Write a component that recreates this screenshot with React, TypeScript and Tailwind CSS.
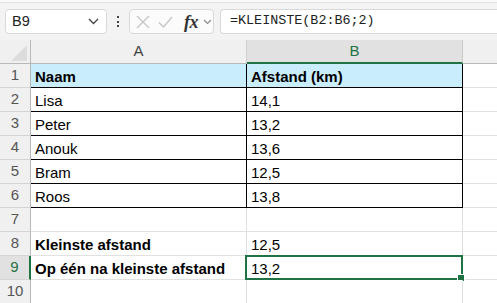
import React from "react";

type Row = { n: number; a?: string; b?: string; kind?: "head" | "table" | "bold" };

const ROWS: Row[] = [
  { n: 1, a: "Naam", b: "Afstand (km)", kind: "head" },
  { n: 2, a: "Lisa", b: "14,1", kind: "table" },
  { n: 3, a: "Peter", b: "13,2", kind: "table" },
  { n: 4, a: "Anouk", b: "13,6", kind: "table" },
  { n: 5, a: "Bram", b: "12,5", kind: "table" },
  { n: 6, a: "Roos", b: "13,8", kind: "table" },
  { n: 7 },
  { n: 8, a: "Kleinste afstand", b: "12,5", kind: "bold" },
  { n: 9, a: "Op één na kleinste afstand", b: "13,2", kind: "bold" },
  { n: 10 },
];

function Toolbar() {
  return (
    <div className="h-[40px] bg-[#f3f3f3] relative">
      <div className="h-[3px] bg-[#f9f9f9] border-b border-[#e3e3e3]" />
      <div className="flex items-center pt-[6px] pl-[5px] gap-0">
        <div className="w-[102px] h-[25px] bg-white border border-[#d9d9d9] rounded-[4px] flex items-center justify-between pl-[6px] pr-[7px]">
          <span className="text-[14.5px] text-[#222]">B9</span>
          <svg width="11" height="7" viewBox="0 0 11 7" fill="none">
            <path d="M1 1l4.5 4.5L10 1" stroke="#444" strokeWidth="1.3" />
          </svg>
        </div>
        <div className="w-[22px] flex flex-col items-center gap-[2.5px]">
          <span className="w-[2px] h-[2px] bg-[#444]" />
          <span className="w-[2px] h-[2px] bg-[#444]" />
          <span className="w-[2px] h-[2px] bg-[#444]" />
        </div>
        <div className="w-[85px] h-[25px] bg-[#fbfbfb] border border-[#d9d9d9] rounded-[4px] flex items-center pl-[6px]">
          <svg width="14" height="14" viewBox="0 0 14 14" fill="none">
            <path d="M1 1l12 12M13 1L1 13" stroke="#c4c4c4" strokeWidth="1.2" />
          </svg>
          <svg width="15" height="12" viewBox="0 0 15 12" fill="none" className="ml-[8px]">
            <path d="M1 6.5l4.5 4.5L14 1" stroke="#c4c4c4" strokeWidth="1.2" />
          </svg>
          <span
            className="ml-[11px] text-[18px] italic font-bold text-[#333] leading-none tracking-[-0.5px]"
            style={{ fontFamily: '"Liberation Serif", serif' }}
          >
            fx
          </span>
          <svg width="9" height="6" viewBox="0 0 9 6" fill="none" className="ml-[5px]">
            <path d="M1 1l3.5 3.5L8 1" stroke="#888" strokeWidth="1.1" />
          </svg>
        </div>
        <div className="ml-[6px] flex-1 h-[25px] bg-white border border-r-0 border-[#d9d9d9] rounded-l-[4px] flex items-center pl-[9px]">
          <span className="text-[13.4px] text-[#222]" style={{ fontFamily: '"Liberation Mono", monospace' }}>
            =KLEINSTE(B2:B6;2)
          </span>
        </div>
      </div>
    </div>
  );
}

function Cell({ text, kind, col, selected }: { text?: string; kind?: Row["kind"]; col: "a" | "b"; selected?: boolean }) {
  const inTable = kind === "head" || kind === "table";
  const bold = kind === "head" || (kind === "bold" && col === "a");
  return (
    <div
      className={`relative h-[24px] border-r border-b pl-[4px] text-[15px] leading-[25px] whitespace-nowrap text-black ${
        inTable ? "border-black" : "border-[#e1e1e1]"
      } ${kind === "head" ? "bg-[#caedfb]" : "bg-white"} ${bold ? "font-bold" : ""}`}
    >
      {text}
      {selected && (
        <div className="absolute left-[-2px] top-[-1px] right-[-1px] bottom-[-1px] border-2 border-[#1f7244]">
          <span className="absolute right-[-4px] bottom-[-4px] w-[6px] h-[6px] bg-[#1f7244] border border-white box-content" />
        </div>
      )}
    </div>
  );
}

export default function App() {
  return (
    <div className="w-[497px] h-[303px] overflow-hidden bg-white" style={{ fontFamily: '"Liberation Sans", Arial, sans-serif' }}>
      <Toolbar />
      <div className="grid grid-cols-[31px_216px_216px_1fr]">
        <div className="h-[24px] bg-[#f0f0f0] border-r border-b border-[#b8b8b8] relative">
          <svg width="16" height="16" viewBox="0 0 16 16" className="absolute right-[3px] bottom-[2px]">
            <path d="M16 0V16H0z" fill="#dcdcdc" />
          </svg>
        </div>
        <div className="h-[24px] bg-[#f0f0f0] border-r border-b border-[#d0d0d0] border-b-[#b8b8b8] flex items-center justify-center text-[15px] text-[#444]">
          A
        </div>
        <div className="h-[24px] bg-[#e1e1e1] border-r border-[#c8c8c8] border-b-2 border-b-[#1f7244] flex items-center justify-center text-[15px] text-[#1f7244]">
          B
        </div>
        <div className="h-[24px] bg-[#f0f0f0] border-b border-[#b8b8b8]" />
        {ROWS.map((r) => (
          <React.Fragment key={r.n}>
            <div
              className={`h-[24px] border-r border-b flex items-center justify-center text-[15px] ${
                r.n === 9
                  ? "bg-[#e1e1e1] text-[#1f7244] border-r-2 border-r-[#1f7244] border-b-[#d4d4d4]"
                  : "bg-[#f0f0f0] text-[#555] border-[#d4d4d4] border-r-[#b8b8b8]"
              }`}
            >
              {r.n}
            </div>
            <Cell text={r.a} kind={r.kind} col="a" />
            <Cell text={r.b} kind={r.kind} col="b" selected={r.n === 9} />
            <div className="h-[24px] border-b border-[#e1e1e1]" />
          </React.Fragment>
        ))}
      </div>
    </div>
  );
}
